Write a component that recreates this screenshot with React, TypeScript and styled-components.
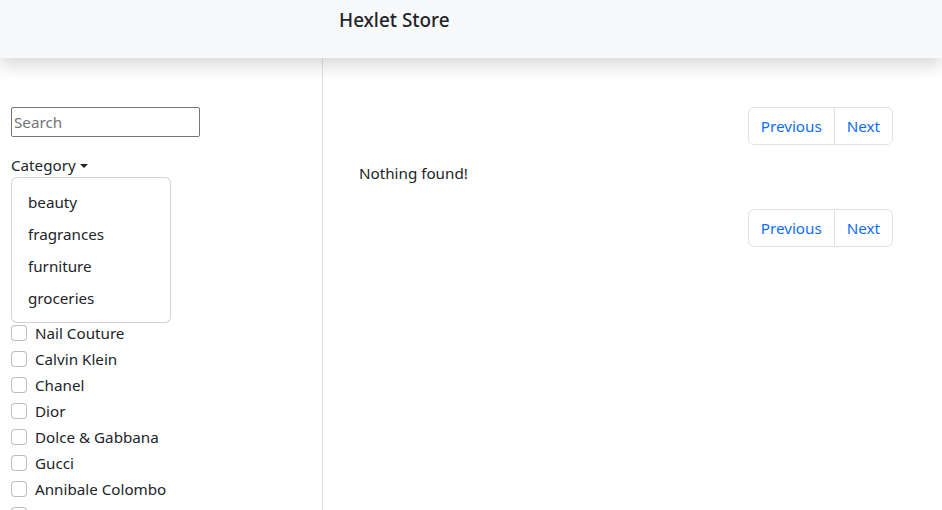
import React from "react";
import styled, {createGlobalStyle} from "styled-components";

const GlobalStyle = createGlobalStyle`
  * {
    box-sizing: border-box;
  }

  body {
    margin: 0;
    font-family: "Segoe UI", "Noto Sans", sans-serif;
    font-size: 15.2px;
    line-height: 24px;
    color: #212529;
    background: #fff;
    overflow: hidden;
  }
`;

const Page = styled.div`
  height: 510px;
  display: flex;
  flex-direction: column;
`;

const Header = styled.header`
  position: relative;
  z-index: 2;
  height: 58px;
  flex-shrink: 0;
  background: #f8f9fa;
  box-shadow: 0 0.5rem 1rem rgba(0, 0, 0, 0.15);
  padding: 5px 0 0 339px;
`;

const Brand = styled.div`
  font-size: 18.9px;
  font-weight: 500;
  line-height: 30px;
`;

const Body = styled.div`
  flex: 1;
  display: flex;
  min-height: 0;
`;

const Sidebar = styled.aside`
  width: 323px;
  flex-shrink: 0;
  border-right: 1px solid #dee2e6;
  padding: 49px 0 0 11px;
  overflow: hidden;
`;

const SearchInput = styled.input`
  display: block;
  width: 189px;
  height: 30px;
  border: 1px solid #767676;
  border-radius: 2px;
  padding: 1px 2px;
  font: inherit;

  &::placeholder {
    color: #757575;
  }
`;

const Dropdown = styled.div`
  position: relative;
  margin-top: 16px;
`;

const Toggle = styled.div`
  display: inline-flex;
  align-items: center;
  gap: 4px;
  line-height: 24px;
  cursor: pointer;

  &::after {
    content: "";
    border-top: 0.3em solid;
    border-right: 0.3em solid transparent;
    border-left: 0.3em solid transparent;
    margin-top: 1px;
  }
`;

const Menu = styled.ul`
  position: absolute;
  top: 24px;
  left: 0;
  z-index: 1;
  width: 160px;
  margin: 0;
  padding: 8px 0;
  list-style: none;
  background: #fff;
  border: 1px solid rgba(0, 0, 0, 0.175);
  border-radius: 6px;
`;

const MenuItem = styled.li`
  padding: 4px 16px;
  line-height: 24px;
  white-space: nowrap;
`;

const BrandList = styled.div`
  margin-top: 40px;
`;

const Check = styled.label`
  display: flex;
  align-items: flex-start;
  gap: 8px;
  min-height: 24px;
  margin-bottom: 2px;
  line-height: 24px;
  white-space: nowrap;
`;

const Box = styled.span`
  width: 16px;
  height: 16px;
  margin-top: 4px;
  flex-shrink: 0;
  border: 1px solid rgba(0, 0, 0, 0.25);
  border-radius: 4px;
  background: #fff;
`;

const Main = styled.main`
  flex: 1;
  padding: 49px 49px 0 36px;
  display: flex;
  flex-direction: column;
`;

const PagerRow = styled.nav`
  display: flex;
  justify-content: flex-end;
`;

const Pager = styled.div`
  display: flex;
`;

const PageButton = styled.button<{ $first?: boolean; $last?: boolean }>`
  font: inherit;
  line-height: 24px;
  padding: 6px 12px;
  color: #0d6efd;
  background: #fff;
  border: 1px solid #dee2e6;
  margin-left: ${p => (p.$first ? 0 : "-1px")};
  border-radius: ${p => (p.$first ? "6px 0 0 6px" : p.$last ? "0 6px 6px 0" : "0")};
  cursor: pointer;
`;

const Empty = styled.p`
  margin: 16px 0 24px;
`;

const categories = ["beauty", "fragrances", "furniture", "groceries"];

// the first brands sit under the open category menu
const brands = [
  "Essence",
  "Glamour Beauty",
  "Velvet Touch",
  "Chic Cosmetics",
  "Nail Couture",
  "Calvin Klein",
  "Chanel",
  "Dior",
  "Dolce & Gabbana",
  "Gucci",
  "Annibale Colombo",
  "Furniture Co.",
];

const Pagination = () => (
  <PagerRow>
    <Pager>
      <PageButton $first>Previous</PageButton>
      <PageButton $last>Next</PageButton>
    </Pager>
  </PagerRow>
);

export default function App() {
  return (
    <Page>
      <GlobalStyle/>
      <Header>
        <Brand>Hexlet Store</Brand>
      </Header>
      <Body>
        <Sidebar>
          <SearchInput placeholder="Search"/>
          <Dropdown>
            <Toggle>Category</Toggle>
            <Menu>
              {categories.map(c => (
                <MenuItem key={c}>{c}</MenuItem>
              ))}
            </Menu>
          </Dropdown>
          <BrandList>
            {brands.map(b => (
              <Check key={b}>
                <Box/>
                {b}
              </Check>
            ))}
          </BrandList>
        </Sidebar>
        <Main>
          <Pagination/>
          <Empty>Nothing found!</Empty>
          <Pagination/>
        </Main>
      </Body>
    </Page>
  );
}
